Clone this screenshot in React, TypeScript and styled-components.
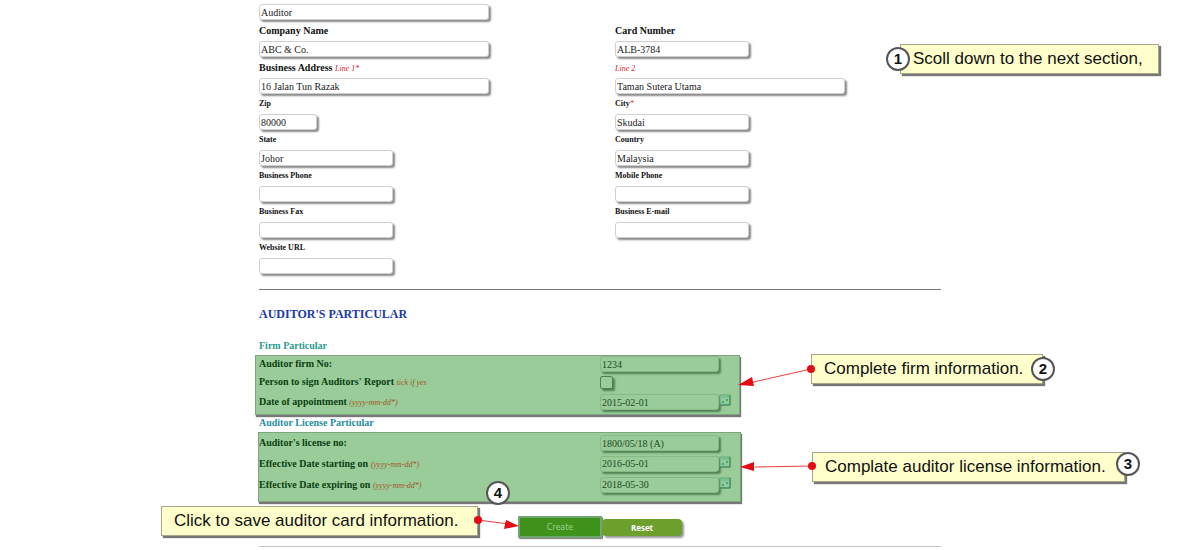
import React from "react";
import styled, { createGlobalStyle, css } from "styled-components";

const GlobalStyle = createGlobalStyle`
  * { box-sizing: border-box; }
  body {
    margin: 0;
    background: #fff;
    font-family: "Liberation Serif", "Times New Roman", serif;
    color: #111;
    overflow-x: hidden;
  }
`;

const Page = styled.main`
  position: relative;
  width: 100%;
  max-width: 682px;
  margin: 0 auto;
  padding-top: 4px;
`;

const FieldGrid = styled.div`
  display: grid;
  grid-template-columns: 356px 1fr;
`;

const Field = styled.div<{ $column?: number }>`
  display: flex;
  flex-direction: column;
  align-items: flex-start;
  grid-column: ${(p) => p.$column ?? "auto"};
`;

const FieldLabel = styled.label<{ $small?: boolean }>`
  font-weight: bold;
  font-size: ${(p) => (p.$small ? 8 : 10)}px;
  line-height: ${(p) => (p.$small ? 20 : 21)}px;
  white-space: nowrap;
`;

const Hint = styled.span`
  font-size: 8px;
  line-height: 8px;
  font-weight: normal;
  font-style: italic;
  color: #e0202c;
`;

const widths = { long: 230, medium: 134, entry: 119, short: 58 };

const TextInput = styled.input<{ $size: keyof typeof widths }>`
  width: ${(p) => widths[p.$size]}px;
  height: 16px;
  padding: 0 1px;
  border: 1px solid #d0d0d0;
  border-radius: 3px;
  background: #fff;
  box-shadow: 2px 2px 2px #8a8a8a;
  color: #222;
  font-family: inherit;
  font-size: 10px;
  line-height: 14px;
  outline: none;
`;

const Divider = styled.hr<{ $faint?: boolean }>`
  height: 1px;
  border: 0;
  margin: ${(p) => (p.$faint ? "8px 0 0" : "15px 0 0")};
  background: ${(p) => (p.$faint ? "#c4c4c4" : "#777")};
`;

const SectionTitle = styled.h2`
  margin: 14px 0 14px;
  font-size: 12px;
  line-height: 20px;
  color: #1c39a8;
`;

const GroupTitle = styled.h3<{ $blue?: boolean }>`
  margin: 0 0 1px;
  font-size: 10px;
  line-height: 16px;
  color: ${(p) => (p.$blue ? "#258d9c" : "#2b9a8e")};
`;

const Panel = styled.section<{ $wide?: boolean }>`
  display: flex;
  flex-direction: column;
  width: ${(p) => (p.$wide ? 485 : 483)}px;
  margin-left: ${(p) => (p.$wide ? -4 : -1)}px;
  padding-left: ${(p) => (p.$wide ? 3 : 0)}px;
  padding-bottom: ${(p) => (p.$wide ? 2 : 6)}px;
  border: 1px solid #7fa57f;
  background: #99cc99;
  box-shadow: 1px 2px 1px #777;
`;

const PanelRow = styled.div<{ $height: number }>`
  display: grid;
  grid-template-columns: 341px 1fr;
  align-items: center;
  height: ${(p) => p.$height}px;
  color: #0b3f10;

  ${Hint} {
    color: #a3562a;
  }
`;

const PanelLabel = styled.label`
  font-size: 10px;
  font-weight: bold;
  line-height: 16px;
  white-space: nowrap;
`;

const Controls = styled.div`
  display: flex;
  align-items: flex-start;
`;

const greenControl = css`
  border: 1px solid #87b987;
  background: #99cc99;
  box-shadow: 2px 2px 2px #548054;
`;

const PanelInput = styled(TextInput)`
  ${greenControl}
  color: #1d4a22;
`;

const Tick = styled.input`
  appearance: none;
  width: 13px;
  height: 13px;
  margin: 0;
  ${greenControl}
  border-color: #4f7f55;
  border-radius: 2px;
`;

const CalendarButton = styled.button`
  display: block;
  width: 12px;
  height: 12px;
  padding: 0;
  border: 0;
  background: none;

  svg {
    display: block;
  }
`;

const Actions = styled.div`
  display: flex;
  align-items: center;
  margin: 14px 0 0 259px;
`;

const ActionButton = styled.button<{ $active?: boolean }>`
  width: ${(p) => (p.$active ? 84 : 80)}px;
  height: ${(p) => (p.$active ? 22 : 17)}px;
  padding: 0;
  border: ${(p) => (p.$active ? "2px solid #73a573" : "0")};
  border-radius: ${(p) => (p.$active ? 1 : 4)}px;
  background: ${(p) => (p.$active ? "#3f931b" : "#6d9f2c")};
  box-shadow: ${(p) => (p.$active ? "1px 1px 1px #777" : "2px 2px 2px #999")};
  color: ${(p) => (p.$active ? "#9ed08c" : "#fff")};
  font-family: ${(p) => (p.$active ? '"DejaVu Sans"' : '"Open Sans"')}, sans-serif;
  font-size: 8px;
  font-weight: ${(p) => (p.$active ? "normal" : "bold")};
`;

const Callout = styled.aside<{ $x: number; $y: number; $width: number }>`
  position: absolute;
  left: ${(p) => p.$x}px;
  top: ${(p) => p.$y}px;
  width: ${(p) => p.$width}px;
  padding-left: 12px;
  border: 1px solid #a5a58a;
  background: #ffffcc;
  box-shadow: 2px 2px 1px #777;
  color: #111;
  font-family: "Liberation Sans", Arial, sans-serif;
  font-size: 17px;
  line-height: 28px;
  white-space: nowrap;
`;

const Badge = styled.span<{ $x: number; $y: number }>`
  position: absolute;
  left: ${(p) => p.$x}px;
  top: ${(p) => p.$y}px;
  width: 24px;
  height: 24px;
  border: 2px solid #555;
  border-radius: 50%;
  background: #fff;
  font-size: 15px;
  font-weight: bold;
  line-height: 20px;
  text-align: center;
`;

const Arrows = styled.svg`
  position: absolute;
  left: 0;
  top: 0;
  overflow: visible;
  pointer-events: none;
`;

type FieldSpec = {
  id: string;
  label: string;
  hint?: string;
  value?: string;
  size: keyof typeof widths;
  small?: boolean;
  column?: number;
};

const fields: FieldSpec[] = [
  { id: "company", label: "Company Name", value: "ABC & Co.", size: "long" },
  { id: "card", label: "Card Number", value: "ALB-3784", size: "medium" },
  { id: "line1", label: "Business Address ", hint: "Line 1*", value: "16 Jalan Tun Razak", size: "long" },
  { id: "line2", label: "", hint: "Line 2", value: "Taman Sutera Utama", size: "long" },
  { id: "zip", label: "Zip", value: "80000", size: "short", small: true },
  { id: "city", label: "City", hint: "*", value: "Skudai", size: "medium", small: true },
  { id: "state", label: "State", value: "Johor", size: "medium", small: true },
  { id: "country", label: "Country", value: "Malaysia", size: "medium", small: true },
  { id: "phone", label: "Business Phone", size: "medium", small: true },
  { id: "mobile", label: "Mobile Phone", size: "medium", small: true },
  { id: "fax", label: "Business Fax", size: "medium", small: true },
  { id: "email", label: "Business E-mail", size: "medium", small: true },
  { id: "website", label: "Website URL", size: "medium", small: true, column: 1 },
];

function CalendarIcon() {
  return (
    <svg width="12" height="12" viewBox="0 0 12 12" aria-hidden="true">
      <rect x="1" y="1" width="10" height="10" fill="#8fcb9c" stroke="#5fa878" />
      <path d="M2 3h8" stroke="#6fb585" strokeWidth="1" />
      <rect x="3" y="7" width="2" height="2" fill="#4fa56c" />
      <rect x="7" y="5" width="2" height="2" fill="#4fa56c" />
      <path d="M11 1v10H1" fill="none" stroke="#39805a" />
    </svg>
  );
}

type PanelFieldProps = {
  id: string;
  label: string;
  hint?: string;
  value?: string;
  height: number;
  kind?: "text" | "tick" | "date";
};

function PanelField({ id, label, hint, value, height, kind = "text" }: PanelFieldProps) {
  return (
    <PanelRow $height={height}>
      <PanelLabel htmlFor={id}>
        {label} {hint && <Hint>{hint}</Hint>}
      </PanelLabel>
      <Controls>
        {kind === "tick" ? (
          <Tick id={id} type="checkbox" />
        ) : (
          <PanelInput id={id} $size="entry" defaultValue={value} />
        )}
        {kind === "date" && (
          <CalendarButton type="button" aria-label={`Pick date: ${label}`}>
            <CalendarIcon />
          </CalendarButton>
        )}
      </Controls>
    </PanelRow>
  );
}

export default function App() {
  return (
    <>
      <GlobalStyle />
      <Page>
        <form onSubmit={(e) => e.preventDefault()}>
          <FieldGrid>
            <Field $column={1}>
              <TextInput $size="long" aria-label="Role" defaultValue="Auditor" />
            </Field>
          </FieldGrid>
          <FieldGrid>
            {fields.map((f) => (
              <Field key={f.id} $column={f.column}>
                <FieldLabel htmlFor={f.id} $small={f.small}>
                  {f.label}
                  {f.hint && <Hint>{f.hint}</Hint>}
                </FieldLabel>
                <TextInput id={f.id} $size={f.size} defaultValue={f.value} />
              </Field>
            ))}
          </FieldGrid>
          <Divider />
          <SectionTitle>AUDITOR'S PARTICULAR</SectionTitle>
          <GroupTitle>Firm Particular</GroupTitle>
          <Panel $wide>
            <PanelField id="firm" label="Auditor firm No:" value="1234" height={16} />
            <PanelField id="sign" label="Person to sign Auditors' Report" hint="tick if yes" kind="tick" height={20} />
            <PanelField id="appointed" label="Date of appointment" hint="(yyyy-mm-dd*)" value="2015-02-01" kind="date" height={20} />
          </Panel>
          <GroupTitle $blue>Auditor License Particular</GroupTitle>
          <Panel>
            <PanelField id="license" label="Auditor's license no:" value="1800/05/18 (A)" height={20} />
            <PanelField id="starting" label="Effective Date starting on" hint="(yyyy-mm-dd*)" value="2016-05-01" kind="date" height={21} />
            <PanelField id="expiring" label="Effective Date expiring on" hint="(yyyy-mm-dd*)" value="2018-05-30" kind="date" height={21} />
          </Panel>
          <Actions>
            <ActionButton type="submit" $active>Create</ActionButton>
            <ActionButton type="reset">Reset</ActionButton>
          </Actions>
          <Divider $faint />
        </form>

        <Callout $x={641} $y={44} $width={259}>
          Scoll down to the next section,
          <Badge $x={-15} $y={2}>1</Badge>
        </Callout>
        <Callout $x={552} $y={354} $width={232}>
          Complete firm information.
          <Badge $x={219} $y={2}>2</Badge>
        </Callout>
        <Callout $x={553} $y={452} $width={313}>
          Complate auditor license information.
          <Badge $x={303} $y={-1}>3</Badge>
        </Callout>
        <Callout $x={-98} $y={506} $width={317}>
          Click to save auditor card information.
          <Badge $x={324} $y={-26}>4</Badge>
        </Callout>
        <Arrows width="682" height="540" aria-hidden="true">
          <g stroke="#e84040" fill="#e60a14">
            <path d="M552 369L490 383M553 466L496 467M219 520L250 524" />
            <g stroke="none">
              <circle cx="552" cy="369" r="4" />
              <circle cx="553" cy="466" r="4" />
              <circle cx="219" cy="520" r="4" />
              <path d="M479 385L493 377L495 386Z" />
              <path d="M481 467L495 462V471Z" />
              <path d="M260 526L245 529L247 520Z" />
            </g>
          </g>
        </Arrows>
      </Page>
    </>
  );
}
